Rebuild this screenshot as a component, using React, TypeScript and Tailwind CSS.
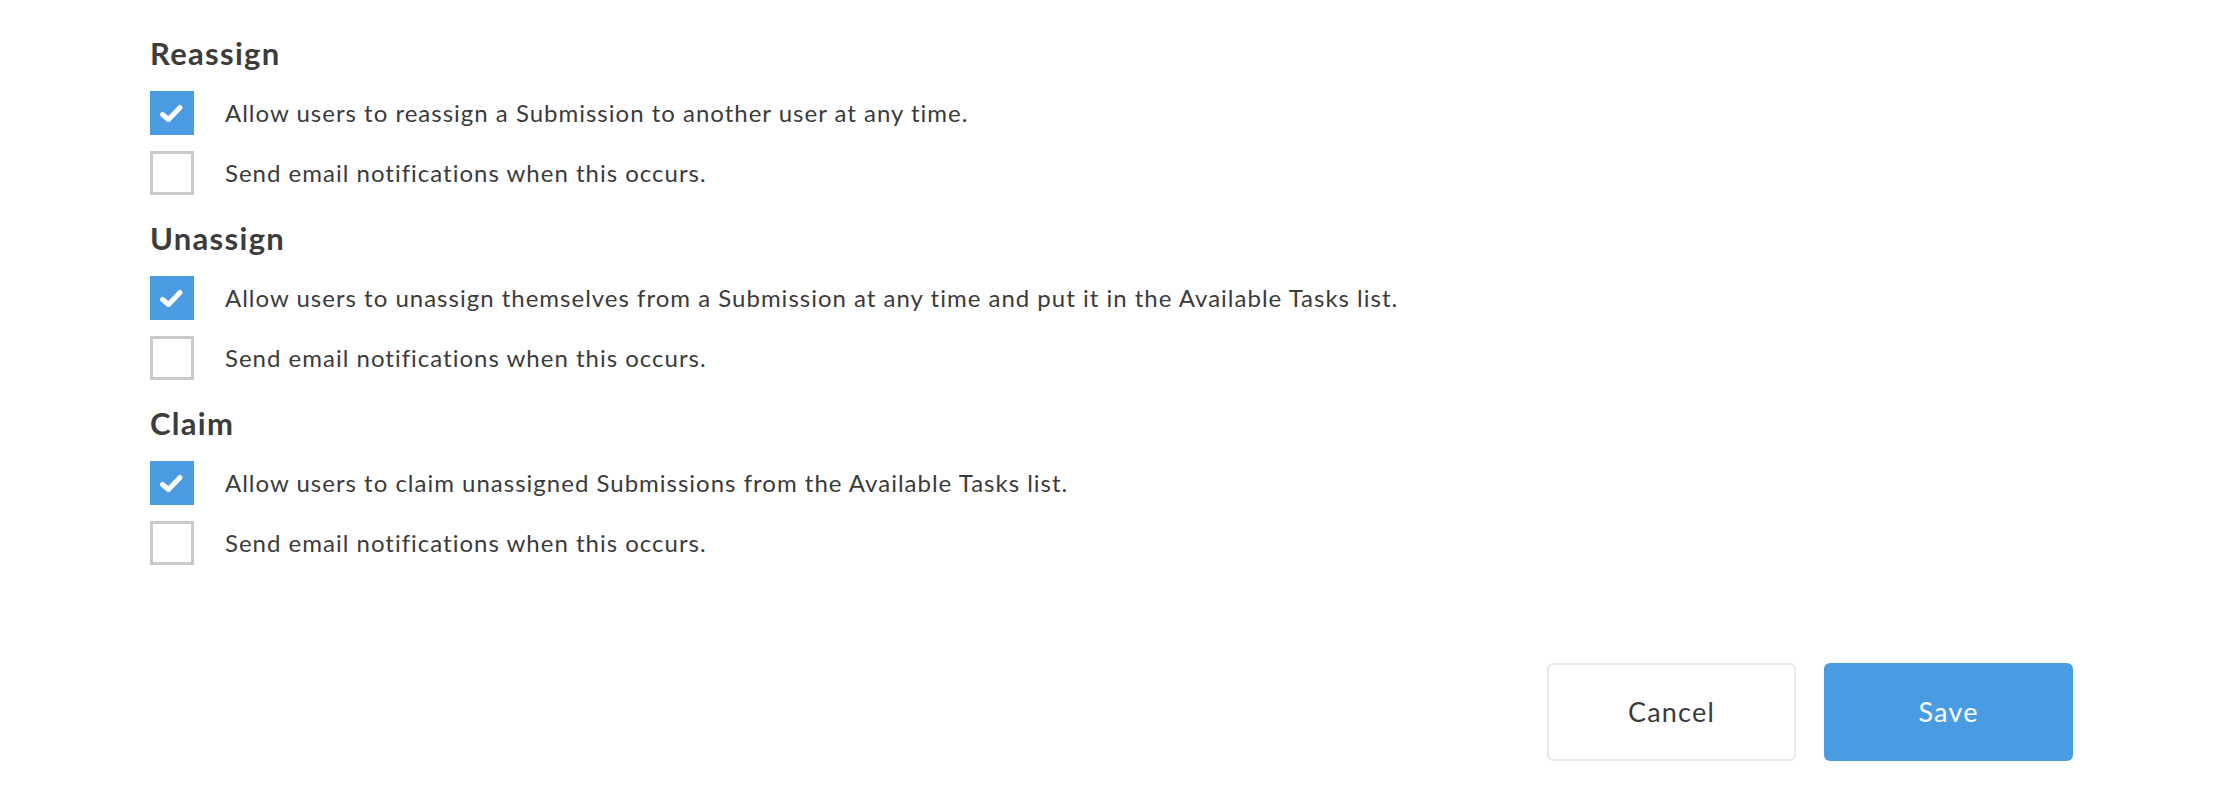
import React from 'react';

interface OptionRowProps {
  label: string;
  checked: boolean;
}

const OptionRow: React.FC<OptionRowProps> = ({ label, checked }) => {
  return (
    <label className="flex items-center">
      {checked ? (
        <span className="flex h-[44px] w-[44px] shrink-0 items-center justify-center bg-[#4a9be1]">
          <svg width="44" height="44" viewBox="0 0 44 44" fill="none">
            <path
              d="M12.5 23.5 L18.5 28.5 L30 16.5"
              stroke="white"
              strokeWidth={5}
              strokeLinecap="round"
              strokeLinejoin="round"
            />
          </svg>
        </span>
      ) : (
        <span className="h-[44px] w-[44px] shrink-0 border-[3px] border-[#cacaca] bg-white" />
      )}
      <span className="ml-[31px] text-[24px] leading-[30px] tracking-[1px] text-[#3b3b3b]">{label}</span>
    </label>
  );
};

const sections = [
  {
    title: 'Reassign',
    allow: 'Allow users to reassign a Submission to another user at any time.',
  },
  {
    title: 'Unassign',
    allow: 'Allow users to unassign themselves from a Submission at any time and put it in the Available Tasks list.',
  },
  {
    title: 'Claim',
    allow: 'Allow users to claim unassigned Submissions from the Available Tasks list.',
  },
];

export default function App() {
  return (
    <div
      className="min-h-[800px] w-full bg-white pl-[150px] pr-[157px] pt-[35px]"
      style={{ fontFamily: 'Lato, "Liberation Sans", sans-serif' }}
    >
      {sections.map((s) => (
        <section key={s.title} className="mb-[25px]">
          <h2 className="text-[31px] font-bold leading-[36px] tracking-[1.3px] text-[#3c3c3c]">{s.title}</h2>
          <div className="mt-[20px] flex flex-col gap-[16px]">
            <OptionRow label={s.allow} checked />
            <OptionRow label="Send email notifications when this occurs." checked={false} />
          </div>
        </section>
      ))}

      {/* footer actions */}
      <div className="mt-[98px] flex justify-end gap-[28px]">
        <button className="h-[98px] w-[249px] rounded-[6px] border-2 border-[#e8e8e8] bg-white text-[27px] tracking-[1.2px] text-[#3b3b3b]">
          Cancel
        </button>
        <button className="h-[98px] w-[249px] rounded-[6px] bg-[#499ce2] text-[27px] tracking-[1.2px] text-white">
          Save
        </button>
      </div>
    </div>
  );
}
